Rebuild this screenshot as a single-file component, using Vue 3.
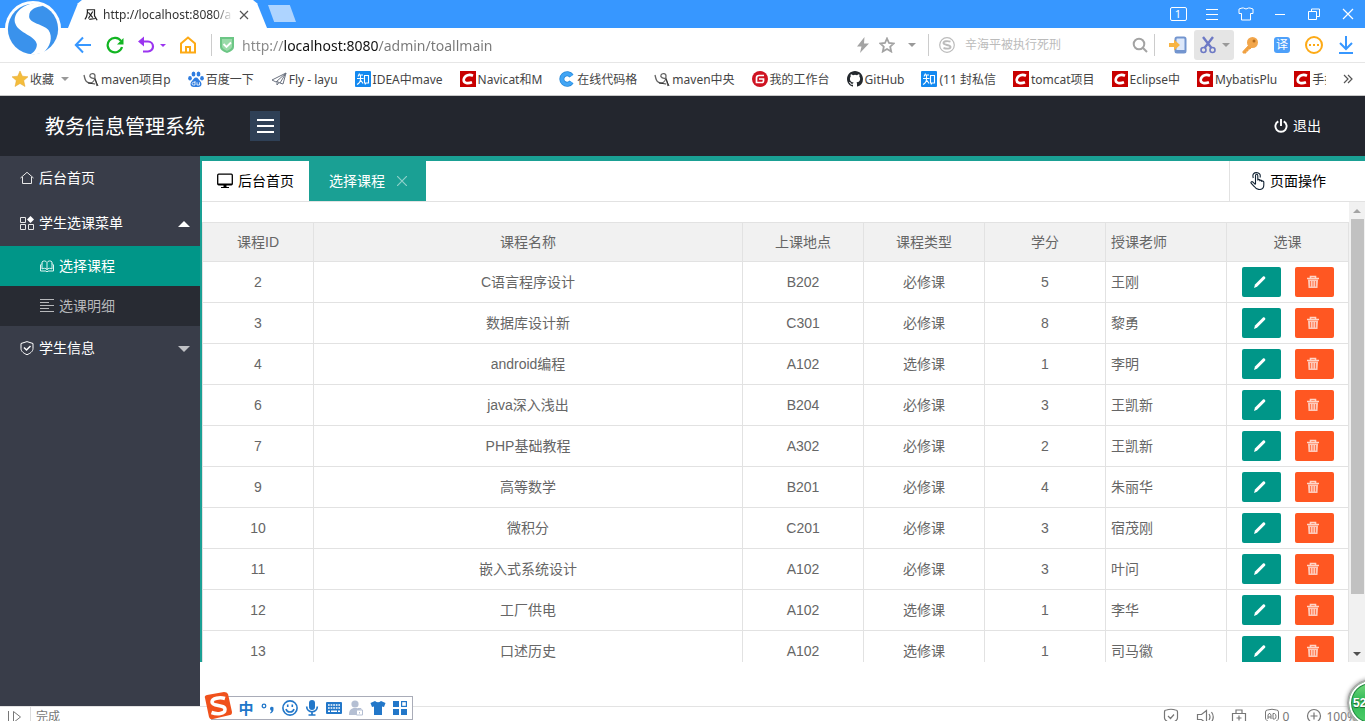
<script setup>
import { ref } from 'vue'

const address = ref('http://localhost:8080/admin/toallmain')
const keyword = ref('')

const bookmarks = [
  { icon: 'bird', text: 'maven项目p' },
  { icon: 'paw', text: '百度一下' },
  { icon: 'plane', text: 'Fly - layu' },
  { icon: 'zhi', text: 'IDEA中mave' },
  { icon: 'csdn', text: 'Navicat和M' },
  { icon: 'blue-c', text: '在线代码格' },
  { icon: 'bird', text: 'maven中央' },
  { icon: 'gitee', text: '我的工作台' },
  { icon: 'github', text: 'GitHub' },
  { icon: 'zhi', text: '(11 封私信' },
  { icon: 'csdn', text: 'tomcat项目' },
  { icon: 'csdn', text: 'Eclipse中' },
  { icon: 'csdn', text: 'MybatisPlu' },
  { icon: 'csdn', text: '手把' }
]

const courses = [
  [2, 'C语言程序设计', 'B202', '必修课', 5, '王刚'],
  [3, '数据库设计新', 'C301', '必修课', 8, '黎勇'],
  [4, 'android编程', 'A102', '选修课', 1, '李明'],
  [6, 'java深入浅出', 'B204', '必修课', 3, '王凯新'],
  [7, 'PHP基础教程', 'A302', '必修课', 2, '王凯新'],
  [9, '高等数学', 'B201', '必修课', 4, '朱丽华'],
  [10, '微积分', 'C201', '必修课', 3, '宿茂刚'],
  [11, '嵌入式系统设计', 'A102', '必修课', 3, '叶问'],
  [12, '工厂供电', 'A102', '选修课', 1, '李华'],
  [13, '口述历史', 'A102', '选修课', 1, '司马徽']
]

const imeIcons = ['dots', 'smile', 'mic', 'keyboard', 'user', 'tee', 'apps']
const imeNames = ['标点', '表情', '语音', '键盘', '账户', '皮肤', '工具箱']
</script>

<template>
  <div class="window">
    <svg class="sprite" aria-hidden="true">
      <symbol id="bird" viewBox="0 0 16 16">
        <path d="M1 4c1 5 2 8 6 8 3 0 5-3 5-7 0-3-4-3-5-1s2 4 5 3l2 8" fill="none" stroke="#666" stroke-width="1.3" />
        <path d="M5 12l7 1M12 8l3 7" fill="none" stroke="#333" />
      </symbol>
      <symbol id="paw" viewBox="0 0 16 16" fill="#2f7de0">
        <ellipse cx="5.5" cy="3" rx="1.9" ry="2.6" /><ellipse cx="10.5" cy="3" rx="1.9" ry="2.6" />
        <ellipse cx="2" cy="7.2" rx="1.8" ry="2.3" /><ellipse cx="14" cy="7.2" rx="1.8" ry="2.3" />
        <path d="M8 6.5c-2 0-2.500 2-4 3.500-3 3-1 6 1.500 6h5c2.500 0 4.500-3 1.500-6-1.500-1.500-2-3.500-4-3.500z" />
        <path d="M7 10v4H5.500a1.300 1.300 0 010-2.700H7M9 11.300V14h2.500v-2.700" fill="none" stroke="#fff" stroke-width=".8" />
      </symbol>
      <symbol id="plane" viewBox="0 0 16 16">
        <path d="M15 2L1 9l4 2 10-9-6 10-3-1.500V14l2-2.500M9 12l3 1 3-11" fill="none" stroke="#6b7280" stroke-width="1" />
      </symbol>
      <symbol id="zhi" viewBox="0 0 16 16">
        <rect width="16" height="16" rx="1" fill="#1389f0" />
        <path d="M4.500 2.500L3 5.500M4 4h4M2 7.500h6.500M5.500 4v4c0 3-1.500 4.500-3.500 5.500M6 9.500l2 3M9.500 4.500h4v7.500h-4zM11 12l-1 1.500" fill="none" stroke="#fff" stroke-width="1.100" />
      </symbol>
      <symbol id="csdn" viewBox="0 0 16 16">
        <rect width="16" height="16" fill="#c80000" />
        <path d="M13 4.700C10 3.300 4.500 3.500 3.700 8.500c-.5 4 4.500 4.300 8.300 2.800" fill="none" stroke="#fff" stroke-width="2.600" />
      </symbol>
      <symbol id="blue-c" viewBox="0 0 16 16">
        <path d="M12.500 5a5.300 5.300 0 100 6" fill="none" stroke="#2587d8" stroke-width="5" />
        <path d="M12.500 5a5.300 5.300 0 100 6" fill="none" stroke="#41a5f5" stroke-width="3.500" />
      </symbol>
      <symbol id="gitee" viewBox="0 0 16 16">
        <circle cx="8" cy="8" r="8" fill="#cf1322" />
        <path d="M12 4.500H7Q4.500 4.500 4.500 7v4.500H10q1.500 0 1.500-1.500V8H7" fill="none" stroke="#fff" stroke-width="1.700" />
      </symbol>
      <symbol id="github" viewBox="0 0 16 16">
        <path fill="#24292e" d="M8 0C3.580 0 0 3.580 0 8c0 3.540 2.290 6.530 5.470 7.590.4.070.55-.17.55-.38 0-.19-.010-.82-.010-1.490-2.010.37-2.530-.49-2.690-.94-.09-.23-.48-.94-.82-1.130-.28-.15-.68-.52-.010-.53.63-.010 1.080.58 1.230.82.72 1.210 1.870.87 2.330.66.070-.52.28-.87.51-1.070-1.780-.2-3.640-.89-3.640-3.950 0-.87.31-1.590.82-2.150-.08-.2-.36-1.020.08-2.120 0 0 .67-.21 2.200.82a7.600 7.600 0 014 0c1.530-1.040 2.200-.82 2.200-.82.44 1.100.16 1.920.08 2.120.51.56.82 1.270.82 2.150 0 3.070-1.870 3.750-3.650 3.950.29.25.54.73.54 1.480 0 1.070-.010 1.930-.010 2.200 0 .21.15.46.55.38A8 8 0 0016 8c0-4.420-3.580-8-8-8z" />
      </symbol>
      <symbol id="pencil" viewBox="0 0 16 16">
        <path d="M2 14l1-3.500 8-8c1-1 3.200.8 2 2.200l-8 8z" fill="#fff" />
      </symbol>
      <symbol id="trash" viewBox="0 0 16 16">
        <path d="M2 4.500h12M5.500 4V2.500h5V4" fill="none" stroke="#ffd5c8" stroke-width="1.600" />
        <path d="M3 5.500h10l-.5 8.500h-9z" fill="#ffc9b9" />
        <path d="M5.500 7v5.500M8 7v5.500M10.500 7v5.500" stroke="#ff7a52" stroke-width="1" />
      </symbol>
      <symbol id="dots" viewBox="0 0 16 16">
        <circle cx="4" cy="6" r="1.800" fill="none" stroke="#2277c9" stroke-width="1.300" />
        <path d="M10 8.500a1.800 1.800 0 113.500.7c0 2-1 3.300-3 4.300l-.5-.8c1-.6 1.500-1.300 1.500-2q-1.500-.5-1.500-2.200z" fill="#2277c9" />
      </symbol>
      <symbol id="smile" viewBox="0 0 16 16" fill="none" stroke="#2277c9" stroke-width="1.600">
        <circle cx="8" cy="8" r="7.100" /><path d="M4 9c1 4 7 4 8 0M5.700 4.500v2.500M10.300 4.500v2.500" />
      </symbol>
      <symbol id="mic" viewBox="0 0 16 16" fill="none" stroke="#2277c9">
        <rect x="5" y="0" width="6" height="10" rx="3" fill="#2277c9" stroke="none" />
        <path d="M2.700 6.500c0 7 10.600 7 10.600 0M8 12v3M4.500 15h7" stroke-width="1.700" />
      </symbol>
      <symbol id="keyboard" viewBox="0 0 16 16">
        <rect y="2" width="16" height="12" rx="1" fill="#2277c9" />
        <path d="M2 5h12M2 8h12" stroke="#fff" stroke-width="1.600" stroke-dasharray="1.700 .9" /><path d="M2 11.300h2M5 11.300h6M12 11.300h2" stroke="#fff" stroke-width="1.500" />
      </symbol>
      <symbol id="user" viewBox="0 0 16 16" fill="#b4bfd3">
        <circle cx="7" cy="4" r="3.600" /><path d="M1 15c0-5 2-7 6-7s5 1 6 3v4z" />
        <path d="M8.500 10h6v5h-6z" fill="#fff" stroke="#b4bfd3" /><path d="M10 10V8.500h3V10M11.500 12v1.500" fill="none" stroke="#b4bfd3" />
      </symbol>
      <symbol id="tee" viewBox="0 0 16 16">
        <path d="M5 1q3 2.500 6 0l4.500 2-1.500 4-2-.5V15H4V6.500L2 7 .5 3z" fill="#2277c9" />
      </symbol>
      <symbol id="apps" viewBox="0 0 16 16" fill="#2277c9">
        <rect x="1" y="1" width="6" height="6" /><rect x="1" y="9" width="6" height="6" /><rect x="9" y="9" width="6" height="6" />
        <rect x="9.600" y="1.600" width="4.800" height="4.800" fill="none" stroke="#2277c9" stroke-width="1.200" />
      </symbol>
    </svg>

    <header class="titlebar">
      <div class="tab">
        <svg class="i14" viewBox="0 0 16 16" fill="none" stroke="#222" stroke-width="1.400"><path d="M3 2h9v7l3 5M4 2c0 6-1 9-3 11M5 5l5 6M10 4l-5 8M6 13l7-1" /></svg>
        <span class="tab-title">http://localhost:8080/a</span>
        <button class="bare tab-close" aria-label="关闭标签"><svg class="i10" viewBox="0 0 10 10"><path d="M1 1l8 8M9 1l-8 8" stroke="#555" stroke-width="1.200" /></svg></button>
      </div>
      <button class="bare new-tab" aria-label="新标签页"></button>
      <div class="controls">
        <button class="bare" aria-label="标签数"><span class="count">1</span></button>
        <button class="bare" aria-label="菜单"><svg class="i16" viewBox="0 0 16 16"><path d="M2 3.500h12M2 8.500h12M2 13.500h12" stroke="#fff" /></svg></button>
        <button class="bare" aria-label="皮肤"><svg class="i16" viewBox="0 0 16 16"><path d="M5.500 2q2.500 2 5 0h1.500l3 1v4.500h-2.500V14h-9V7.500H1V3l3-1z" fill="none" stroke="#fff" /></svg></button>
        <button class="bare" aria-label="最小化"><svg class="i16" viewBox="0 0 16 16"><path d="M3 8.500h10" stroke="#fff" /></svg></button>
        <button class="bare" aria-label="还原"><svg class="i16" viewBox="0 0 16 16" fill="none" stroke="#fff"><path d="M3 5.500h7.500V13.500H2.500V5.500zM5.500 5V3h8v7.500H11" /></svg></button>
        <button class="bare" aria-label="关闭"><svg class="i16" viewBox="0 0 16 16"><path d="M3 3l10 10M13 3L3 13" stroke="#fff" stroke-width="1.200" /></svg></button>
      </div>
      <svg class="browser-logo" viewBox="0 0 60 60">
        <circle cx="30" cy="30" r="29" fill="#fff" />
        <circle cx="30" cy="30" r="26" fill="#3a92ec" />
        <path d="M32 3C18 5 8 15 12 25c3 9 21 12 22 21 0 5-4 9-8 11l14-2c8-6 11-17 6-24-5-6-20-7-20-14 0-8 8-10 15-11z" fill="#fff" />
      </svg>
    </header>

    <nav class="toolbar">
      <button class="bare nav-btn" aria-label="后退"><svg class="i18" viewBox="0 0 18 18" fill="none" stroke="#3797ff" stroke-width="2"><path d="M17 9H2M9 1.500L1.800 9 9 16.500" /></svg></button>
      <button class="bare nav-btn reload" aria-label="刷新"><svg class="i18" viewBox="0 0 18 18"><path d="M15 5a7.300 7.300 0 101 6" fill="none" stroke="#12b522" stroke-width="2.200" /><path d="M17.500 2v6.500H11z" fill="#12b522" /></svg></button>
      <button class="bare nav-btn undo" aria-label="撤销"><svg class="i18" viewBox="0 0 18 18"><path d="M5 5.500h6a5 5 0 010 10H6" fill="none" stroke="#9b35f0" stroke-width="2.200" /><path d="M1 5.500L7 .5v10z" fill="#9b35f0" /></svg><i class="caret purple"></i></button>
      <button class="bare nav-btn home" aria-label="主页"><svg class="i18" viewBox="0 0 18 18" fill="none" stroke="#fdaa16" stroke-width="2"><path d="M2 7.500L9 1.500l7 6V16.500H2zM7 16v-5h4v5" /></svg></button>
      <i class="divider"></i>
      <svg class="i16 safe" viewBox="0 0 16 16"><path d="M1 0h14v10q0 3.500-7 6-7-2.500-7-6z" fill="#6cc685" /><path d="M3 2h10v7.500q0 2-5 4.500-5-2.500-5-4.500z" fill="#9adba9" /><path d="M4.500 7L7.500 10l4.500-4.500" fill="none" stroke="#fff" stroke-width="1.800" /></svg>
      <input v-model="address" class="address" aria-label="地址" />
      <div class="address-tools">
        <svg class="i16" viewBox="0 0 16 16"><path d="M9.500 0L2 9.500h4.500L5 16l9-9.500H9z" fill="#a3a3a3" /></svg>
        <svg class="i16" viewBox="0 0 16 16"><path d="M8 1.500l2 4.500 4.700.5-3.500 3.200 1 4.800L8 12l-4.200 2.500 1-4.800L1.300 6.500 6 6z" fill="none" stroke="#a3a3a3" stroke-width="1.800" /></svg>
        <i class="caret"></i>
      </div>
      <i class="divider"></i>
      <svg class="i16 sogou" viewBox="0 0 16 16" fill="none" stroke="#bbb"><circle cx="8" cy="8" r="7.300" stroke-width="1.200" /><path d="M11.500 4.700c-3-1-7-.7-7 1.300 0 2.300 7 1.700 7 4 0 2-4 2-7 1" stroke-width="1.900" /></svg>
      <input v-model="keyword" class="search" aria-label="搜索" placeholder="辛海平被执行死刑" />
      <button class="bare find" aria-label="搜索"><svg class="i16" viewBox="0 0 16 16" fill="none" stroke="#a3a3a3" stroke-width="2"><circle cx="7" cy="7" r="5.300" /><path d="M11 11l4 4" /></svg></button>
      <i class="divider"></i>
      <div class="tools">
        <button class="bare" aria-label="手机"><svg class="i18" viewBox="0 0 18 18"><rect x="6.500" y="1.500" width="10" height="15" rx="1.500" fill="#dde8fa" stroke="#7395cf" stroke-width="2" /><path d="M6 14h11v3H6z" fill="#7395cf" /><path d="M0 7h5V3.500l6 5.500-6 5.500V11H0z" fill="#f8b443" /></svg></button>
        <button class="bare cut" aria-label="截图"><svg class="i18" viewBox="0 0 18 18" fill="none" stroke="#6d79c5" stroke-width="1.600"><path d="M4 1l8.500 11M14 1L5.500 12" stroke-width="2.400" /><circle cx="4.500" cy="14" r="2.500" /><circle cx="13.500" cy="14" r="2.500" /></svg><i class="caret"></i></button>
        <button class="bare" aria-label="密码"><svg class="i18" viewBox="0 0 18 18"><path d="M9 8l-7 7.500V17h3v-2h2v-2h2l3-3" fill="#f0a040" stroke="#f0a040" /><circle cx="11.500" cy="6.500" r="5.500" fill="#f2a64b" /><circle cx="13" cy="5" r="1.500" fill="#b36c1f" /></svg></button>
        <button class="bare" aria-label="翻译"><span class="translate">译</span></button>
        <button class="bare" aria-label="更多"><svg class="i18" viewBox="0 0 18 18"><circle cx="9" cy="9" r="8" fill="none" stroke="#fdaa16" stroke-width="2" /><path d="M4 9h2M8 9h2M12 9h2" stroke="#fdaa16" stroke-width="2" /></svg></button>
        <button class="bare" aria-label="下载"><svg class="i18" viewBox="0 0 18 18" fill="none" stroke="#3797ff" stroke-width="2"><path d="M9 0v13M3 7l6 6 6-6M2 17h14" /></svg></button>
      </div>
    </nav>

    <nav class="bookmarks">
      <button class="bare favorites"><svg class="i16" viewBox="0 0 16 16"><path d="M8 0l2.300 5.200 5.700.6-4.300 3.800 1.300 5.900L8 12.500 3 15.500l1.300-5.900L0 5.800l5.700-.6z" fill="#f4bd3c" stroke="#e5a52e" stroke-width=".5" /></svg><span>收藏</span><i class="caret"></i></button>
      <div class="bookmark-list">
        <a v-for="(b, i) in bookmarks" :key="i" href="#"><svg class="i16"><use :href="'#' + b.icon" /></svg><span>{{ b.text }}</span></a>
      </div>
      <button class="bare more" aria-label="更多书签"><svg class="i10" viewBox="0 0 10 10" fill="none" stroke="#555" stroke-width="1.200"><path d="M1 1l4 4-4 4M5 1l4 4-4 4" /></svg></button>
    </nav>

    <header class="app-header">
      <h1>教务信息管理系统</h1>
      <button class="bare fold" aria-label="折叠菜单"><svg class="i18" viewBox="0 0 18 18"><path d="M1 3h17M1 9h17M1 15h17" stroke="#fff" stroke-width="2" /></svg></button>
      <a class="logout" href="#"><svg class="i14" viewBox="0 0 14 14" fill="none" stroke="#fff" stroke-width="1.900"><path d="M4.300 2.300a5.600 5.600 0 105.400 0M7 0v7" /></svg>退出</a>
    </header>

    <div class="app-body">
      <aside class="side">
        <a class="item" href="#"><svg class="i14" viewBox="0 0 14 14" fill="none" stroke="#e8e8e8"><path d="M.5 7L7 1.300 13.500 7M2.500 6v6.500h9V6" /></svg>后台首页</a>
        <a class="item" href="#"><svg class="i14" viewBox="0 0 14 14" fill="none" stroke="#e8e8e8"><path d="M.5 1.500h5v5h-5zM.5 8.500h5v5h-5zM8.500 8.500h5v5h-5z" /><path d="M10.500 0L14 3.500 10.500 7 7 3.500z" fill="#fff" stroke="none" /></svg>学生选课菜单<i class="arrow up"></i></a>
        <div class="sub">
          <a class="item active" href="#"><svg class="i14" viewBox="0 0 14 14" fill="none" stroke="#dff5f2"><path d="M7 11V3.500C6 1.500 3 1.500 2 3v7c1-1 4-1 5 .5 1-1.500 4-1.500 5-.5V3c-1-1.500-4-1.500-5 .5M2 4.500L.5 6v6H6l1 1 1-1h5.500V6L12 4.500" /></svg>选择课程</a>
          <a class="item" href="#"><svg class="i14" viewBox="0 0 14 14" stroke="#b7b8bb"><path d="M0 .5h14M0 3.500h9M0 6.500h14M0 9.500h9M0 12.500h14" /></svg>选课明细</a>
        </div>
        <a class="item" href="#"><svg class="i14" viewBox="0 0 14 14" fill="none" stroke="#fff"><path d="M7 .6L13 2.500v5c0 3-3 5-6 6.200-3-1.200-6-3.200-6-6.200v-5z" /><path d="M4 6.500L6.500 9l4-4" stroke-width="1.500" /></svg>学生信息<i class="arrow down"></i></a>
      </aside>

      <main class="main">
        <div class="frame">
          <div class="page-tabs">
            <button class="bare page-tab"><svg class="i16" viewBox="0 0 16 16"><rect x=".7" y="1.200" width="14.600" height="10.600" rx="1" fill="none" stroke="#000" stroke-width="1.300" /><path d="M1 10.500h14V12H1zM6.500 12h3v2h2.500v1H4v-1h2.500z" /></svg>后台首页</button>
            <button class="bare page-tab current">选择课程<svg class="i10" viewBox="0 0 10 10"><path d="M0 0l10 10M10 0L0 10" stroke="#8fd0ca" stroke-width="1.200" /></svg></button>
            <button class="bare page-ops"><svg class="i18" viewBox="0 0 18 18" fill="none" stroke="#123" stroke-width="1.100"><path d="M6.500 12V3.700c0-2 2.300-2 2.300 0V8.500c0-1.500 2-1.500 2 0v.7c0-1.400 2-1.400 2 0v.7c0-1.400 2-1.200 2 0V13c0 3-2 4.500-4.500 4.500-3 0-4-1.500-5-3L2.300 11.500c-1-1.500.5-2.500 1.700-1.300l2.500 2.500M4.300 6C3 2 5 .6 7.500.6S12 2.500 11 5.500" /></svg>页面操作</button>
          </div>
          <div class="content">
            <div class="pane">
              <table>
                <colgroup><col class="c-id" /><col /><col class="c-mid" /><col class="c-mid" /><col class="c-mid" /><col class="c-mid" /><col class="c-act" /></colgroup>
                <thead>
                  <tr><th>课程ID</th><th>课程名称</th><th>上课地点</th><th>课程类型</th><th>学分</th><th class="left">授课老师</th><th>选课</th></tr>
                </thead>
                <tbody>
                  <tr v-for="c in courses" :key="c[0]">
                    <td v-for="(v, i) in c" :key="i" :class="{ left: i === 5 }">{{ v }}</td>
                    <td>
                      <div class="actions">
                        <button class="act edit" aria-label="选课"><svg class="i16"><use href="#pencil" /></svg></button>
                        <button class="act del" aria-label="删除"><svg class="i16"><use href="#trash" /></svg></button>
                      </div>
                    </td>
                  </tr>
                </tbody>
              </table>
            </div>
            <div class="scroll"><i class="tri top"></i><div class="track"><div class="thumb"></div></div><i class="tri bottom"></i></div>
          </div>
        </div>
      </main>
    </div>

    <footer class="status">
      <button class="bare play" aria-label="展开"><svg class="i16" viewBox="0 0 16 16" fill="none" stroke="#777"><path d="M1.500 3v12M6.500 3.500v11l7-5.500z" /></svg></button>
      <span class="done">完成</span>
      <div class="status-tools">
        <svg class="i16" viewBox="0 0 16 16" fill="none" stroke="#777" stroke-width="1.200"><path d="M1.500 4q0-2 2-2 4.500-1.500 9 0 2 0 2 2v6q0 3-6.500 5-6.500-2-6.500-5zM5 8l2.500 2.500L11 6.500" /></svg>
        <svg class="i18" viewBox="0 0 18 18" fill="none" stroke="#777" stroke-width="1.200"><path d="M1.500 6.500h4l5-4v13l-5-4h-4zM13 6q2 3 0 6M15.500 4q3.500 5 0 10" /></svg>
        <svg class="i16" viewBox="0 0 16 16" fill="none" stroke="#777" stroke-width="1.200"><path d="M1.500 5.500h13v9h-13zM5 5V2h6v3M8 7.500v5M5.500 10h5" /></svg>
        <span class="ads"><svg class="i16" viewBox="0 0 16 16" fill="none" stroke="#777"><path d="M1.500 4q0-2 2-2 4.500-1.500 9 0 2 0 2 2v6q0 3-6.500 5-6.500-2-6.500-5z" /><path d="M4 11V7l1-1.500h1L7 7v4M4 9h3M9 5.500h1.500Q12 6 12 8.500T10.500 11H9z" /></svg>0</span>
        <span class="zoom"><svg class="i16" viewBox="0 0 16 16" fill="none" stroke="#777" stroke-width="1.200"><circle cx="8" cy="8" r="6.500" /><path d="M4.500 8h7M8 4.500v7" /></svg>100%</span>
      </div>
    </footer>

    <div class="ime">
      <svg class="ime-logo" viewBox="0 0 28 28"><path d="M1 6q-1-2 2-3L20 0q3 0 4 2l4 18q0 3-2 3L9 27q-3 1-4-2z" fill="#f0511c" /><path d="M21 6.500C16 5 8 6 8 10c0 5 13 2 13 7.500 0 4.500-8 5-13.500 3" fill="none" stroke="#fff" stroke-width="3.500" /></svg>
      <button class="bare zh">中</button>
      <button v-for="(n, i) in imeIcons" :key="n" class="bare" :aria-label="imeNames[i]"><svg class="i16"><use :href="'#' + n" /></svg></button>
    </div>
    <div class="ball">52</div>
  </div>
</template>

<style>
body { margin: 0; overflow: hidden; }
</style>

<style scoped>
.window { position: relative; display: flex; flex-direction: column; height: 100vh; overflow: hidden; background: #fff; color: #444; font: 12px/20px "Noto Sans", "Noto Sans CJK SC", sans-serif; }
.window * { box-sizing: border-box; }
.sprite { position: absolute; width: 0; height: 0; }
svg { display: block; flex: none; }
a { color: inherit; text-decoration: none; }
.i10 { width: 10px; height: 10px; }
.i14 { width: 14px; height: 14px; }
.i16 { width: 16px; height: 16px; }
.i18 { width: 18px; height: 18px; }
.bare { display: flex; align-items: center; justify-content: center; flex: none; margin: 0; padding: 0; border: 0; background: none; color: inherit; font: inherit; }
.caret { border: 4px solid transparent; border-top-color: #999; border-bottom: 0; }
.caret.purple { border-width: 3px; border-top-color: #9b35f0; border-bottom: 0; }
.divider { width: 1px; height: 22px; background: #ccc; flex: none; }

.titlebar { position: relative; display: flex; height: 28px; flex: none; padding-left: 68px; background: #3797ff; color: #fff; }
.tab { display: flex; align-items: center; width: 199px; padding: 2px 12px 0 16px; background: #fff; color: #333; clip-path: polygon(0 100%, 5% 12%, 7% 0, 93% 0, 95% 12%, 100% 100%); }
.tab-title { flex: 1; min-width: 0; margin-left: 5px; overflow: hidden; white-space: nowrap; mask-image: linear-gradient(90deg, #000 86%, transparent); }
.tab-close { width: 22px; }
.new-tab { width: 28px; height: 17px; margin: 5px 0 0 1px; background: #aed4ff; clip-path: polygon(0 0, 78% 0, 100% 100%, 22% 100%); }
.controls { display: flex; margin-left: auto; }
.controls .bare { width: 34px; }
.count { width: 17px; height: 14px; border: 1px solid #fff; border-radius: 2px; font-size: 11px; line-height: 12px; text-align: center; }
.browser-logo { position: absolute; left: 4px; top: 0; z-index: 2; width: 58px; height: 58px; }

.toolbar { display: flex; align-items: center; height: 35px; flex: none; padding: 0 3px 0 66px; border-bottom: 1px solid #e6e6e6; }
.nav-btn { width: 34px; }
.reload { width: 30px; margin-right: 4px; }
.undo { gap: 5px; }
.home { width: 36px; margin: 0 5px 0 2px; }
.safe { margin: 0 7px; }
input { min-width: 0; padding: 0; border: 0; outline: 0; background: none; font: inherit; }
.address { flex: 1; height: 24px; font-size: 14px; color: transparent; background: linear-gradient(90deg, #888 42px, #111 42px, #111 136px, #777 136px); background-clip: text; -webkit-background-clip: text; }
.address-tools { display: flex; align-items: center; gap: 8px; margin-right: 12px; }
.address-tools .caret { margin-left: 5px; }
.sogou { margin: 0 10px; }
.search { width: 167px; }
.search::placeholder { color: #bbb; opacity: 1; }
.find { width: 16px; margin-right: 6px; }
.tools { display: flex; align-items: center; margin-left: 7px; }
.tools .bare { width: 32px; height: 30px; }
.tools .cut { width: 40px; gap: 5px; border-radius: 3px; background: #e5e5e5; }
.translate { width: 16px; height: 16px; border-radius: 3px; background: #4da0fa; color: #fff; line-height: 16px; }

.bookmarks { display: flex; align-items: center; height: 33px; flex: none; padding: 0 12px; border-bottom: 1px solid #c8c8c8; white-space: nowrap; }
.bookmarks span { padding-top: 2px; }
.favorites { gap: 2px; margin-right: 14px; }
.favorites .caret { margin-left: 5px; }
.bookmark-list { display: flex; flex: 1; min-width: 0; gap: 17px; overflow: hidden; margin-right: 17px; }
.bookmark-list a { display: flex; flex: none; align-items: center; gap: 2px; }

.app-header { display: flex; align-items: center; height: 60px; flex: none; padding: 0 44px 0 45px; background: #23262e; color: #fff; }
h1 { width: 205px; margin: 0; padding-top: 2px; font-size: 20px; line-height: 30px; font-weight: 400; white-space: nowrap; }
.fold { width: 30px; height: 30px; background: #2f4056; }
.logout { display: flex; align-items: center; gap: 5px; margin-left: auto; font-size: 14px; }

.app-body { display: flex; flex: 1; min-height: 0; font: 14px/20px "Liberation Sans", "Noto Sans CJK SC", sans-serif; }
.side { width: 200px; flex: none; background: #393d49; color: #fff; }
.item { display: flex; align-items: center; gap: 5px; height: 45px; padding: 0 10px 2px 20px; }
.sub { background: #282b33; color: #b7b8bb; }
.sub .item { height: 40px; padding: 0 10px 0 40px; }
.sub .active { background: #009688; color: #fff; }
.arrow { margin: 2px 0 0 auto; border: 6px solid transparent; }
.up { border-top: 0; border-bottom-color: #fff; }
.down { border-bottom: 0; border-top-color: #c0c1c5; }
.main { display: flex; flex: 1; min-width: 0; padding-bottom: 44px; }
.frame { display: flex; flex-direction: column; flex: 1; min-width: 0; border-top: 5px solid #1aa094; border-left: 2px solid #1aa094; }
.page-tabs { display: flex; height: 41px; flex: none; border-bottom: 1px solid #e2e2e2; color: #000; }
.page-tab { gap: 5px; height: 40px; padding: 0 15px; }
.current { gap: 12px; padding: 0 19px 0 20px; background: #1aa094; color: #fff; }
.page-ops { gap: 3px; width: 136px; margin-left: auto; padding-right: 20px; border-left: 1px solid #e2e2e2; }
.content { display: flex; flex: 1; min-height: 0; }
.pane { flex: 1; min-width: 0; padding-top: 20px; overflow: hidden; }
table { width: 100%; table-layout: fixed; border-collapse: collapse; color: #666; }
.c-id { width: 111px; }
.c-mid { width: 121px; }
.c-act { width: 122px; }
th, td { height: 41px; padding: 0 5px; border: 1px solid #e2e2e2; font-weight: 400; text-align: center; }
th { height: 39px; background: #f1f1f1; }
.left { text-align: left; }
.actions { display: flex; justify-content: center; gap: 14px; }
.act { display: flex; align-items: center; justify-content: center; width: 39px; height: 30px; padding: 0 3px 0 0; border: 0; border-radius: 2px; }
.edit { background: #009688; }
.del { background: #ff5722; }
.scroll { display: flex; flex-direction: column; align-items: center; width: 16px; background: #f1f1f1; }
.tri { margin: 7px 0 6px; border: 4px solid transparent; }
.top { border-top: 0; border-bottom-color: #a3a3a3; }
.bottom { border-bottom: 0; border-top-color: #505050; }
.track { flex: 1; width: 13px; }
.thumb { height: 88%; background: #c1c1c1; }

.status { display: flex; align-items: flex-start; height: 15px; flex: none; overflow: hidden; border-top: 1px solid #e3e3e3; color: #777; }
.play { width: 31px; height: 18px; border-right: 1px solid #ddd; }
.done { margin-left: 5px; }
.status-tools { display: flex; gap: 17px; margin-left: auto; padding: 1px 8px 0 0; }
.status-tools .ads { display: flex; gap: 3px; }
.status-tools .zoom { display: flex; gap: 4px; }
.status-tools span { line-height: 18px; }

.ime { position: absolute; left: 211px; bottom: 1px; display: flex; align-items: center; gap: 6px; height: 24px; padding: 0 4px 0 26px; border: 1px solid #a9acb8; background: #fff; color: #2277c9; }
.ime-logo { position: absolute; left: -8px; bottom: -1px; width: 28px; height: 28px; }
.zh { width: 16px; font-size: 15px; font-weight: 700; }
.ball { position: absolute; right: -30px; bottom: -6px; width: 48px; height: 48px; padding-left: 4px; border: 2px solid #aaa; border-radius: 50%; background: linear-gradient(#7fdc80, #2fb956 45%, #52d06a); box-shadow: inset 0 0 0 2px #fff, inset 0 0 0 3px #238c43, 0 0 4px #999; color: #fff; font: bold 12px/44px "Liberation Sans", sans-serif; text-shadow: 0 1px 1px #175f2d; }
</style>
